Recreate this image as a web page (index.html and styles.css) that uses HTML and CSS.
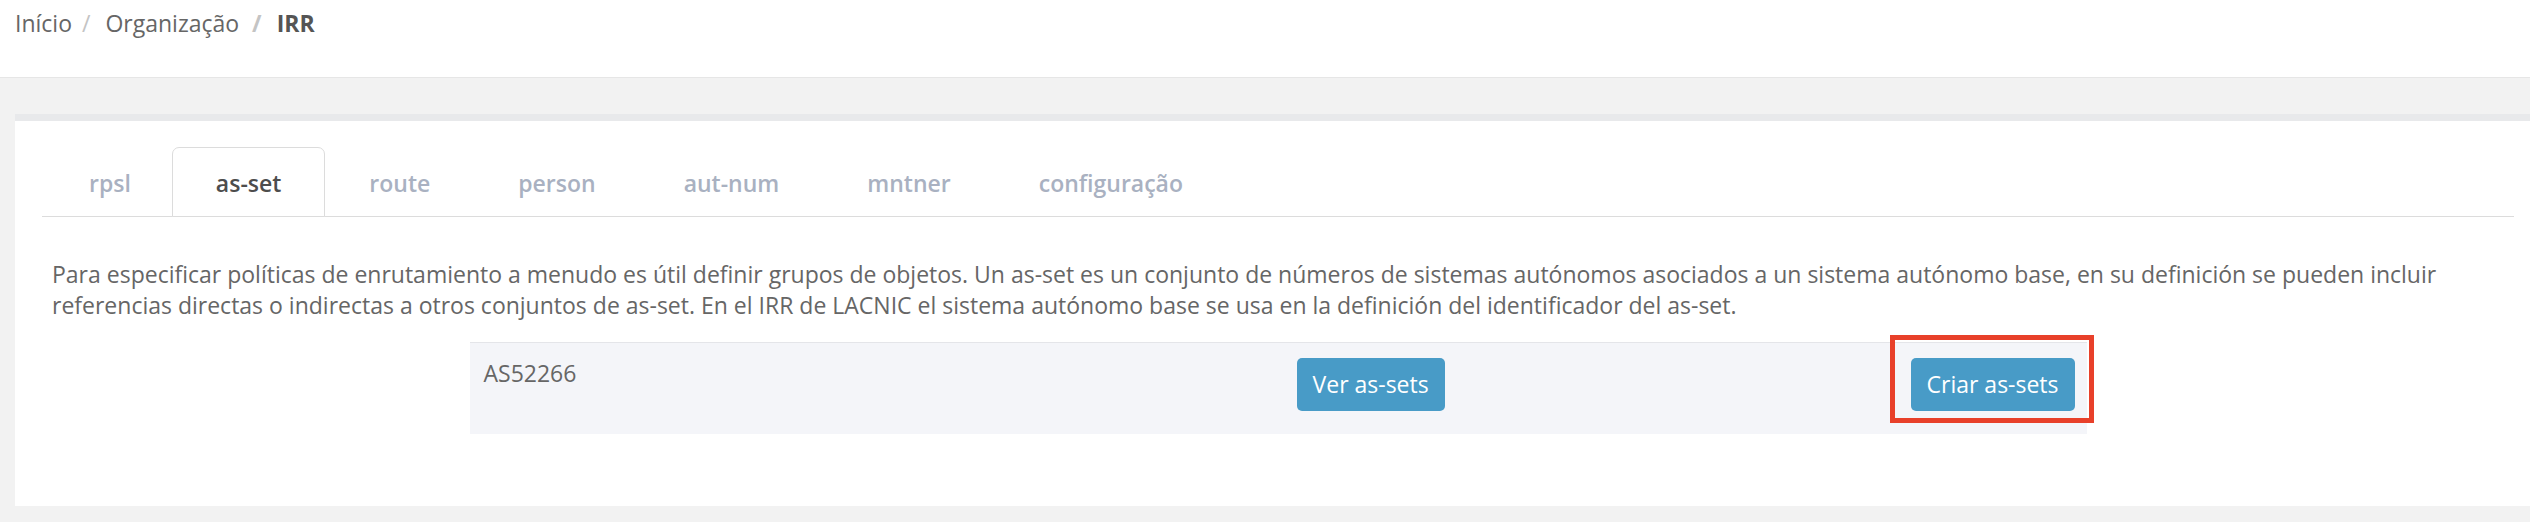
FILE: index.html
```html
<!DOCTYPE html>
<html lang="pt">
<head>
<meta charset="utf-8">
<title>IRR</title>
<link rel="stylesheet" href="styles.css">
</head>
<body>
<header class="topbar">
  <ol class="breadcrumb">
    <li class="crumb">Início</li>
    <li class="crumb">Organização</li>
    <li class="crumb crumb-active">IRR</li>
  </ol>
</header>
<main class="card">
  <ul class="tabs">
    <li class="tab">rpsl</li>
    <li class="tab tab-active">as-set</li>
    <li class="tab">route</li>
    <li class="tab">person</li>
    <li class="tab">aut-num</li>
    <li class="tab">mntner</li>
    <li class="tab">configuração</li>
  </ul>
  <section class="tab-content">
    <p class="desc">Para especificar políticas de enrutamiento a menudo es útil definir grupos de objetos. Un as-set es un conjunto de números de sistemas autónomos asociados a un sistema autónomo base, en su definición se pueden incluir referencias directas o indirectas a otros conjuntos de as-set. En el IRR de LACNIC el sistema autónomo base se usa en la definición del identificador del as-set.</p>
    <div class="asrow">
      <div class="cell">AS52266</div>
      <div class="cell"><button class="btn">Ver as-sets</button></div>
      <div class="cell cell-marked"><button class="btn">Criar as-sets</button><span class="highlight"></span></div>
    </div>
  </section>
</main>
</body>
</html>
```
FILE: styles.css
```css
* { box-sizing: border-box; }
html, body { margin: 0; padding: 0; }
body {
  background: #f2f2f2;
  font-family: "Open Sans", "Liberation Sans", sans-serif;
  font-size: 23px;
  color: #666;
  height: 522px;
  overflow: hidden;
}
.topbar {
  background: #fff;
  height: 78px;
  border-bottom: 1px solid #e6e6e6;
  padding: 8px 0 0 15px;
}
.breadcrumb {
  list-style: none;
  margin: 0;
  padding: 0;
  display: flex;
  line-height: 31px;
}
.crumb { color: #666; }
.crumb + .crumb::before {
  content: "/";
  color: #c4c4c4;
  padding: 0 15px 0 10px;
}
.crumb-active { font-weight: 700; color: #555; }
.crumb-active::before { padding-left: 13px !important; }
.card {
  margin: 36px 0 0 15px;
  background: #fff;
  border-top: 7px solid #e8e9eb;
  padding: 26px 16px 72px 27px;
}
.tabs {
  list-style: none;
  margin: 0;
  padding: 0 0 0 3px;
  display: flex;
  border-bottom: 1px solid #dcdcdc;
}
.tab {
  padding: 20px 43px 17px;
  line-height: 31px;
  font-weight: 600;
  color: #a9b1c1;
  border: 1px solid transparent;
  border-bottom: 0;
  border-radius: 7px 7px 0 0;
  margin-bottom: -1px;
}
.tab:first-child { padding-right: 40px; }
.tab-active {
  color: #4d4d4d;
  border-color: #dcdcdc;
  border-bottom: 1px solid #dcdcdc;
  background: #fff;
}
.tab-content {
  padding: 42px 0 0 10px;
}
.desc {
  margin: 0 0 21px;
  line-height: 31px;
  color: #666;
}
.asrow {
  width: 1617px;
  margin: 0 auto;
  transform: translateX(-5px);
  display: grid;
  grid-template-columns: 813px 614px 1fr;
  background: #f4f5f9;
  border-top: 1px solid #e4e5e9;
  padding: 15px 0 23px;
  line-height: 31px;
}
.cell {
  padding-left: 14px;
  color: #666;
}
.cell-marked { position: relative; }
.btn {
  font-family: inherit;
  font-size: 23px;
  line-height: 31px;
  color: #fff;
  background: #489bc7;
  border: 0;
  border-radius: 5px;
  padding: 11px 16px;
  margin: 0;
}
.highlight {
  position: absolute;
  left: -7px;
  right: -7px;
  top: -23px;
  bottom: -12px;
  border: 5px solid #e8402a;
  pointer-events: none;
}
```
